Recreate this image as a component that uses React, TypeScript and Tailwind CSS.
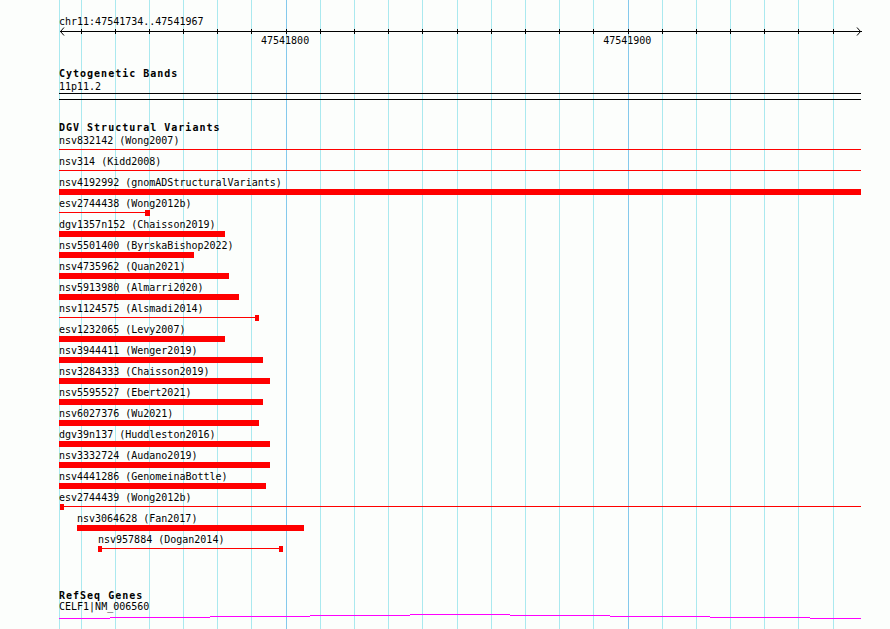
import React from "react";

type Part = { kind: "bar" | "line" | "box"; from: number; to: number };
type Feature = { name: string; start: number; parts: Part[] };

const LEFT = 59;
const RIGHT = 861;

const gridLines = [
    59, 81, 115, 149, 183, 217, 251, 286, 320, 354, 388, 422, 457, 491, 525,
    559, 593, 628, 662, 696, 730, 764, 798, 833,
];
const majorLines = [286, 628];

const bar = (to: number, from = LEFT): Part[] => [{ kind: "bar", from, to }];

const features: Feature[] = [
    { name: "nsv832142 (Wong2007)", start: 59, parts: [{ kind: "line", from: 59, to: RIGHT }] },
    { name: "nsv314 (Kidd2008)", start: 59, parts: [{ kind: "line", from: 59, to: RIGHT }] },
    { name: "nsv4192992 (gnomADStructuralVariants)", start: 59, parts: bar(RIGHT) },
    {
        name: "esv2744438 (Wong2012b)",
        start: 59,
        parts: [
            { kind: "line", from: 59, to: 145 },
            { kind: "box", from: 145, to: 150 },
        ],
    },
    { name: "dgv1357n152 (Chaisson2019)", start: 59, parts: bar(225) },
    { name: "nsv5501400 (ByrskaBishop2022)", start: 59, parts: bar(194) },
    { name: "nsv4735962 (Quan2021)", start: 59, parts: bar(229) },
    { name: "nsv5913980 (Almarri2020)", start: 59, parts: bar(239) },
    {
        name: "nsv1124575 (Alsmadi2014)",
        start: 59,
        parts: [
            { kind: "line", from: 59, to: 255 },
            { kind: "box", from: 255, to: 259 },
        ],
    },
    { name: "esv1232065 (Levy2007)", start: 59, parts: bar(225) },
    { name: "nsv3944411 (Wenger2019)", start: 59, parts: bar(263) },
    { name: "nsv3284333 (Chaisson2019)", start: 59, parts: bar(270) },
    { name: "nsv5595527 (Ebert2021)", start: 59, parts: bar(263) },
    { name: "nsv6027376 (Wu2021)", start: 59, parts: bar(259) },
    { name: "dgv39n137 (Huddleston2016)", start: 59, parts: bar(270) },
    { name: "nsv3332724 (Audano2019)", start: 59, parts: bar(270) },
    { name: "nsv4441286 (GenomeinaBottle)", start: 59, parts: bar(266) },
    {
        name: "esv2744439 (Wong2012b)",
        start: 59,
        parts: [
            { kind: "box", from: 60, to: 64 },
            { kind: "line", from: 64, to: RIGHT },
        ],
    },
    { name: "nsv3064628 (Fan2017)", start: 77, parts: bar(304, 77) },
    {
        name: "nsv957884 (Dogan2014)",
        start: 98,
        parts: [
            { kind: "box", from: 98, to: 102 },
            { kind: "line", from: 102, to: 279 },
            { kind: "box", from: 279, to: 283 },
        ],
    },
];

// intron line of the gene, stepped like the original gd drawing
const geneSteps = [
    [59, 110, 618],
    [110, 210, 617],
    [210, 310, 616],
    [310, 410, 615],
    [410, 510, 614],
    [510, 610, 615],
    [610, 710, 616],
    [710, 810, 617],
    [810, 861, 618],
];

const Grid = () => (
    <svg className="absolute inset-0" width={890} height={629} shapeRendering="crispEdges">
        {gridLines.map(x => (
            <rect
                key={x}
                x={x}
                y={0}
                width={1}
                height={629}
                fill={majorLines.includes(x) ? "#84c9ec" : "#aae9ef"}
            />
        ))}
    </svg>
);

const Ruler = () => (
    <svg width={803} height={6} overflow="visible" shapeRendering="crispEdges" className="block">
        <rect x={1} y={3} width={802} height={1} fill="#000" />
        {gridLines.slice(1).map(x => (
            <rect key={x} x={x - LEFT} y={1} width={1} height={5} fill="#000" />
        ))}
        <polyline points="5,-0.5 1.5,3.5 5,7.5" fill="none" stroke="#000" strokeWidth={1} shapeRendering="auto" />
        <polyline points="798,-0.5 801.5,3.5 798,7.5" fill="none" stroke="#000" strokeWidth={1} shapeRendering="auto" />
    </svg>
);

const Glyph = ({ parts }: { parts: Part[] }) => {
    let prev = LEFT;
    return (
        <div className="flex h-[6px] items-start">
            {parts.map((p, i) => {
                const gap = p.from - prev;
                prev = p.to;
                return (
                    <div
                        key={i}
                        className={
                            p.kind === "line"
                                ? "mt-[2px] h-px shrink-0 bg-[#ff0000]"
                                : "h-[6px] shrink-0 bg-[#ff0000]"
                        }
                        style={{ marginLeft: gap, width: p.to - p.from }}
                    />
                );
            })}
        </div>
    );
};

const TrackTitle = ({ children }: { children: React.ReactNode }) => (
    <h3 className="font-bold tracking-[1px] whitespace-pre">{children}</h3>
);

export default function App() {
    return (
        <div className="relative h-[629px] w-[890px] overflow-hidden bg-[#fcfefc] font-['DejaVu_Sans_Mono',monospace] text-[10px] leading-[13px] text-black">
            <Grid />
            <div className="relative flex w-[803px] flex-col pt-[15px] pl-[59px] box-content">
                <p className="whitespace-pre">chr11:47541734..47541967</p>
                <Ruler />
                <div className="flex whitespace-pre">
                    <span className="ml-[202px]">47541800</span>
                    <span className="ml-[294px]">47541900</span>
                </div>

                <section className="mt-[20px]">
                    <TrackTitle>Cytogenetic Bands</TrackTitle>
                    <p>11p11.2</p>
                    <div className="h-[7px] w-[802px] border-y border-black" />
                </section>

                <section className="mt-[21px]">
                    <TrackTitle>DGV Structural Variants</TrackTitle>
                    {features.map(f => (
                        <div key={f.name} className="pb-[2px]">
                            <p className="whitespace-pre" style={{ marginLeft: f.start - LEFT }}>
                                {f.name}
                            </p>
                            <Glyph parts={f.parts} />
                        </div>
                    ))}
                </section>

                <section className="mt-[35px]">
                    <TrackTitle>RefSeq Genes</TrackTitle>
                    <p className="-mt-[2px]">CELF1|NM_006560</p>
                    <svg width={802} height={7} shapeRendering="crispEdges" className="block">
                        {geneSteps.map(([a, b, y]) => (
                            <rect key={a} x={a - LEFT} y={y - 613} width={b - a} height={1} fill="#ff00ff" />
                        ))}
                    </svg>
                </section>
            </div>
        </div>
    );
}
